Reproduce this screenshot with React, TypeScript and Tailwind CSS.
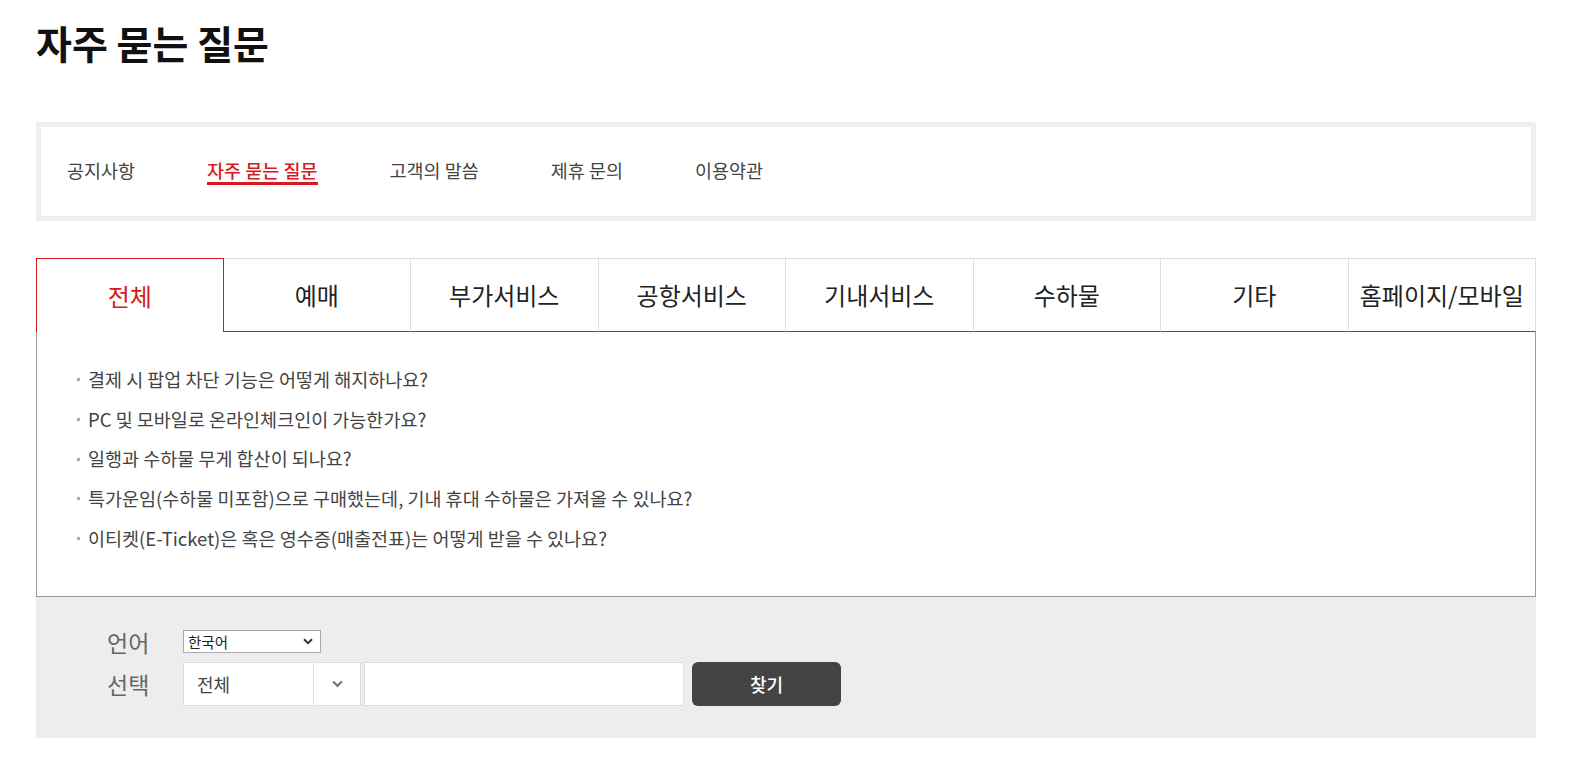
import { useState } from "react";

const navItems = ["공지사항", "자주 묻는 질문", "고객의 말씀", "제휴 문의", "이용약관"];

const tabs = [
  "전체",
  "예매",
  "부가서비스",
  "공항서비스",
  "기내서비스",
  "수하물",
  "기타",
  "홈페이지/모바일",
];

const questions = [
  "결제 시 팝업 차단 기능은 어떻게 해지하나요?",
  "PC 및 모바일로 온라인체크인이 가능한가요?",
  "일행과 수하물 무게 합산이 되나요?",
  "특가운임(수하물 미포함)으로 구매했는데, 기내 휴대 수하물은 가져올 수 있나요?",
  "이티켓(E-Ticket)은 혹은 영수증(매출전표)는 어떻게 받을 수 있나요?",
];

function Chevron({ className }: { className?: string }) {
  return (
    <svg viewBox="0 0 10 7" className={className} fill="none">
      <path d="M1 1.2l4 4 4-4" stroke="currentColor" strokeWidth="2" />
    </svg>
  );
}

export default function App() {
  const [tab, setTab] = useState(0);
  const [q, setQ] = useState("");

  return (
    <div
      className="min-h-screen w-full bg-white text-[#222]"
      style={{ fontFamily: '"Noto Sans CJK KR", "Noto Sans", sans-serif' }}
    >
      <div className="ml-9 w-[1500px]">
        <h1 className="pt-[16px] text-[39px] font-bold leading-[52px] text-[#111]">
          자주 묻는 질문
        </h1>

        {/* top menu */}
        <div className="mt-[54px] flex h-[99px] items-center gap-[72px] border-[5px] border-[#efefef] pl-[26px]">
          {navItems.map((n, i) => (
            <div
              key={n}
              className={[
                "relative mb-[4px] text-[18.5px] leading-[24px]",
                i === 1 ? "font-medium text-[#d71920]" : "text-[#444]",
              ].join(" ")}
            >
              {n}
              {i === 1 && (
                <div className="absolute left-0 right-0 top-[24px] h-[3px] bg-[#d71920]" />
              )}
            </div>
          ))}
        </div>

        {/* category tabs */}
        <div className="mt-[37px] grid grid-cols-8">
          {tabs.map((t, i) => (
            <button
              key={t}
              onClick={() => setTab(i)}
              className={[
                "flex h-[74px] items-center justify-center text-[24px]",
                i === tab
                  ? "border border-b-0 border-[#d71920] text-[#d71920]"
                  : "border-t border-r border-b border-t-[#dddddd] border-r-[#dddddd] border-b-[#d71920] text-[#222]",
                i !== tab && i === 0 ? "border-l border-l-[#dddddd]" : "",
              ].join(" ")}
            >
              {t}
            </button>
          ))}
        </div>

        {/* questions */}
        <div className="border-x border-b border-[#999] pb-[38px] pl-[40px] pt-[28px]">
          {questions.map((s) => (
            <div
              key={s}
              className="flex h-[39.7px] items-center gap-[8px] text-[18.5px] text-[#444]"
            >
              <span className="h-[3px] w-[3px] bg-[#aaa]" />
              <span>{s}</span>
            </div>
          ))}
        </div>

        {/* search */}
        <div className="bg-[#ededed] pb-[32px] pl-[71px] pt-[33px]">
          <div className="flex h-[23px] items-center">
            <div className="w-[76px] text-[23px] text-[#666]">언어</div>
            <div className="flex h-[23px] w-[138px] items-center justify-between border border-[#aaa] bg-white pl-[4px] pr-[7px] text-[14.5px] text-[#222]">
              <span>한국어</span>
              <Chevron className="h-[7px] w-[10px] text-[#333]" />
            </div>
          </div>
          <div className="mt-[9px] flex h-[44px] items-center">
            <div className="w-[76px] text-[23px] text-[#666]">선택</div>
            <div className="flex h-[44px] w-[178px] border border-[#ddd] bg-white">
              <div className="flex w-[129px] items-center pl-[13px] text-[18px] text-[#444]">
                전체
              </div>
              <div className="flex flex-1 items-center justify-center border-l border-[#ddd]">
                <Chevron className="h-[8px] w-[11px] text-[#777]" />
              </div>
            </div>
            <input
              value={q}
              onChange={(e) => setQ(e.target.value)}
              className="ml-[3px] h-[44px] w-[320px] border border-[#ddd] bg-white px-3 text-[16px] outline-none"
            />
            <button className="ml-[8px] h-[44px] w-[149px] rounded-[6px] bg-[#444] text-[18px] font-medium text-white">
              찾기
            </button>
          </div>
        </div>
      </div>
    </div>
  );
}
